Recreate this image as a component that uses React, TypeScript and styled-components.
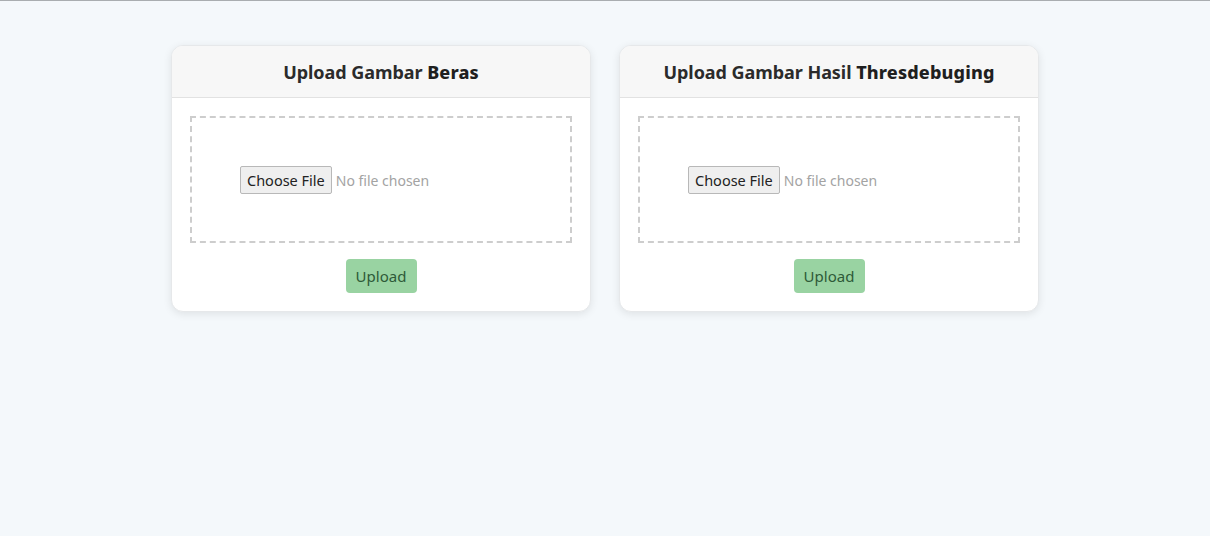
import React from "react";
import styled, { createGlobalStyle } from "styled-components";

const Global = createGlobalStyle`
  html, body { margin: 0; padding: 0; }
  body {
    background: #f4f8fb;
    font-family: "Noto Sans", "Open Sans", sans-serif;
    color: #333;
  }
`;

const Page = styled.div`
  min-height: 535px;
  border-top: 1px solid #a9adb0;
  display: flex;
  justify-content: center;
  align-items: flex-start;
  gap: 28px;
  padding-top: 44px;
  box-sizing: border-box;
`;

const Card = styled.section`
  width: 420px;
  background: #fff;
  border: 1px solid #e6e8ea;
  border-radius: 12px;
  box-shadow: 0 2px 8px rgba(0, 0, 0, 0.09);
  overflow: hidden;
  box-sizing: border-box;
`;

const Header = styled.div`
  height: 52px;
  background: #f7f7f7;
  border-bottom: 1px solid #e2e2e2;
  display: flex;
  align-items: center;
  justify-content: center;
  box-sizing: border-box;
`;

const Title = styled.h2`
  margin: 0;
  font-size: 18px;
  font-weight: 700;
  color: #2b2b2b;
  letter-spacing: -0.05px;
  strong { font-weight: 800; color: #1f1f1f; letter-spacing: 0.15px; }
`;

const Body = styled.div`
  padding: 18px 18px 18px;
  display: flex;
  flex-direction: column;
  align-items: center;
  gap: 16px;
`;

const DropZone = styled.div`
  align-self: stretch;
  height: 127px;
  border: 2px dashed #cdcdcd;
  padding: 0 48px;
  display: flex;
  align-items: center;
  box-sizing: border-box;
`;

const FileInput = styled.input`
  font-family: "Noto Sans", "Open Sans", sans-serif;
  font-size: 14px;
  color: #a3a3a3;
  &::file-selector-button {
    font-family: "Noto Sans", "Open Sans", sans-serif;
    font-size: 14.5px;
    color: #222;
    background: #efefef;
    border: 1px solid #b8b8b8;
    border-radius: 2px;
    height: 28px;
    padding: 0 6px;
    margin-right: 4px;
  }
`;

const UploadButton = styled.button`
  width: 71px;
  height: 34px;
  border: none;
  border-radius: 4px;
  background: #99d3a2;
  color: #2e5a38;
  font-family: "Noto Sans", "Open Sans", sans-serif;
  font-size: 15px;
  cursor: pointer;
`;

function UploadCard({ prefix, bold }: { prefix: string; bold: string }) {
  return (
    <Card>
      <Header>
        <Title>
          {prefix} <strong>{bold}</strong>
        </Title>
      </Header>
      <Body>
        <DropZone>
          <FileInput type="file" />
        </DropZone>
        <UploadButton>Upload</UploadButton>
      </Body>
    </Card>
  );
}

export default function App() {
  return (
    <>
      <Global />
      <Page>
        <UploadCard prefix="Upload Gambar" bold="Beras" />
        <UploadCard prefix="Upload Gambar Hasil" bold="Thresdebuging" />
      </Page>
    </>
  );
}
